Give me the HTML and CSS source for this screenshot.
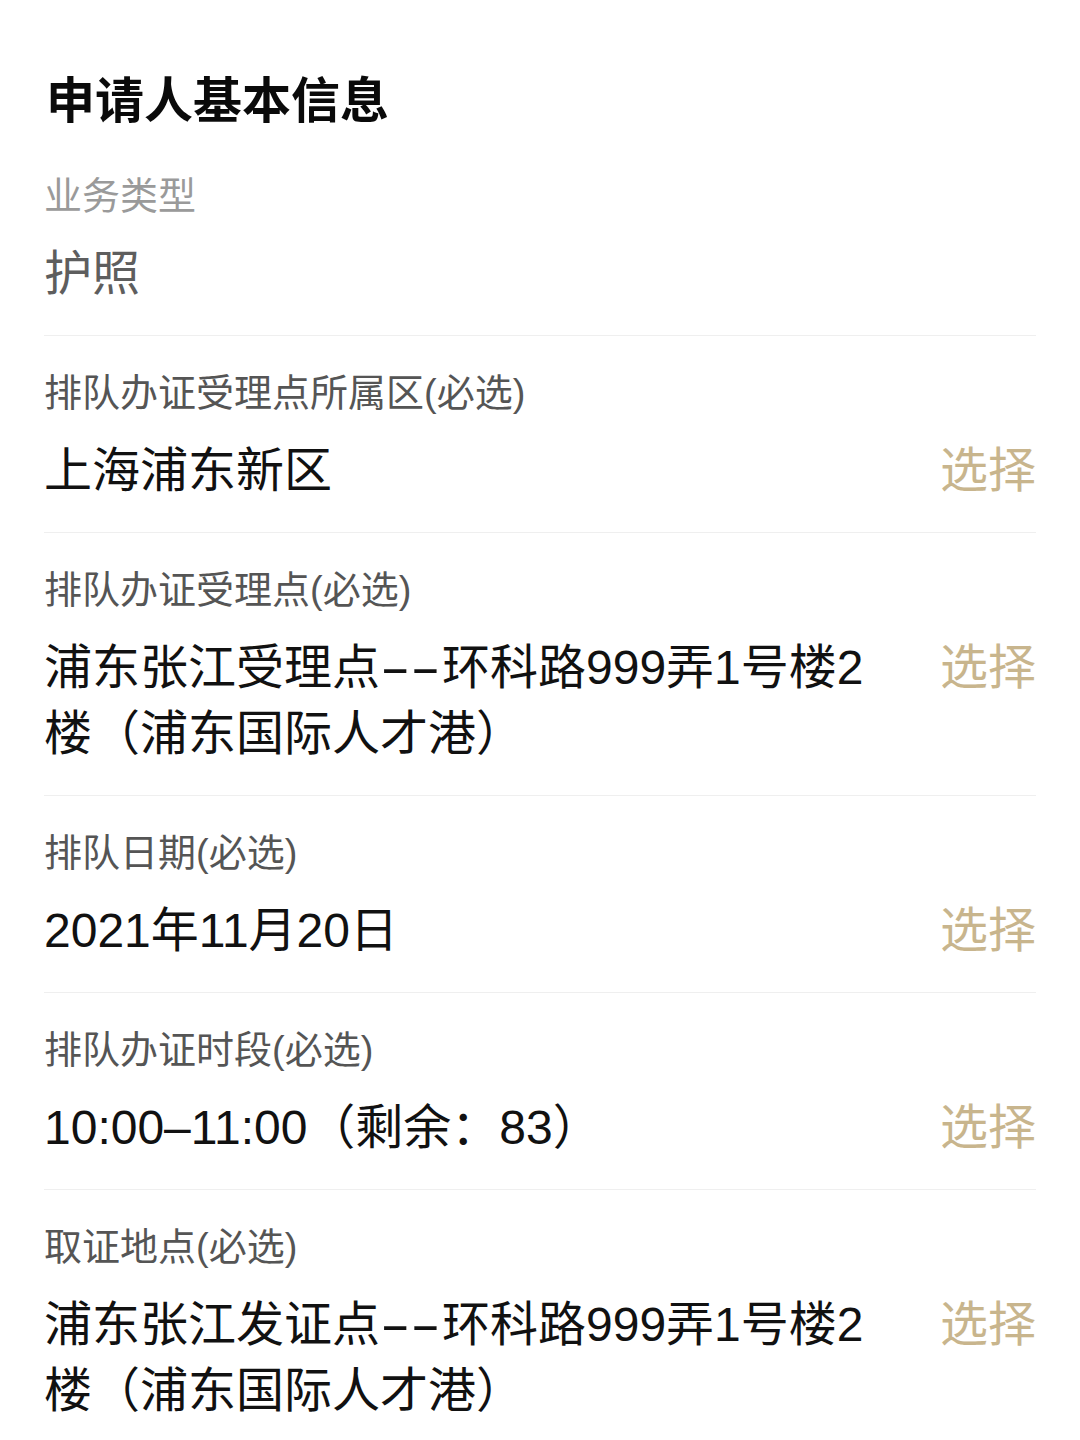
FILE: index.html
```html
<!DOCTYPE html>
<html lang="zh-CN">
<head>
<meta charset="utf-8">
<title>申请人基本信息</title>
<link rel="stylesheet" href="styles.css">
</head>
<body>
<main class="page">
  <h1 class="title">申请人基本信息</h1>
  <section class="row">
    <div class="label label-light">业务类型</div>
    <div class="line">
      <div class="value value-grey">护照</div>
    </div>
  </section>
  <section class="row">
    <div class="label">排队办证受理点所属区(必选)</div>
    <div class="line">
      <div class="value">上海浦东新区</div>
      <div class="pick">选择</div>
    </div>
  </section>
  <section class="row">
    <div class="label">排队办证受理点(必选)</div>
    <div class="line">
      <div class="value"><span class="seg">浦东张江受理点</span><span class="dash">--</span><span class="seg">环科路999弄1号楼2</span><span class="seg">楼（浦东国际人才港）</span></div>
      <div class="pick">选择</div>
    </div>
  </section>
  <section class="row">
    <div class="label">排队日期(必选)</div>
    <div class="line">
      <div class="value">2021年11月20日</div>
      <div class="pick">选择</div>
    </div>
  </section>
  <section class="row">
    <div class="label">排队办证时段(必选)</div>
    <div class="line">
      <div class="value">10:00–11:00（剩余：83）</div>
      <div class="pick">选择</div>
    </div>
  </section>
  <section class="row row-last">
    <div class="label">取证地点(必选)</div>
    <div class="line">
      <div class="value"><span class="seg">浦东张江发证点</span><span class="dash">--</span><span class="seg">环科路999弄1号楼2</span><span class="seg">楼（浦东国际人才港）</span></div>
      <div class="pick">选择</div>
    </div>
  </section>
</main>
</body>
</html>
```

FILE: styles.css
```css
html, body {
  margin: 0;
  padding: 0;
  background: #ffffff;
}

body {
  font-family: "Liberation Sans", "Noto Sans CJK SC", sans-serif;
  color: #111111;
}

.page {
  padding: 64px 44px 0 44px;
}

.title {
  margin: 0 0 9px 2px;
  font-size: 49px;
  line-height: 66px;
  font-weight: 700;
  color: #0a0a0a;
  font-family: "Noto Sans CJK SC", sans-serif;
}

.row {
  padding: 30px 0 28px;
  border-bottom: 1px solid #efefef;
}

.row-last {
  border-bottom: none;
}

.label {
  font-size: 38px;
  line-height: 54px;
  color: #555555;
  margin-bottom: 18px;
}

.label-light {
  color: #9a9a9a;
}

.line {
  display: flex;
  align-items: flex-start;
  justify-content: space-between;
  gap: 40px;
}

.value {
  flex: 1;
  max-width: 850px;
  font-size: 48px;
  line-height: 66px;
  color: #111111;
}

.value-grey {
  color: #5e5e5e;
}

.seg {
  white-space: nowrap;
}

.dash {
  display: inline-block;
  margin-right: 30px;
  transform: scaleX(1.9);
  transform-origin: left center;
  white-space: nowrap;
}

.pick {
  flex: none;
  font-size: 48px;
  line-height: 66px;
  color: #c8b58d;
}
```
